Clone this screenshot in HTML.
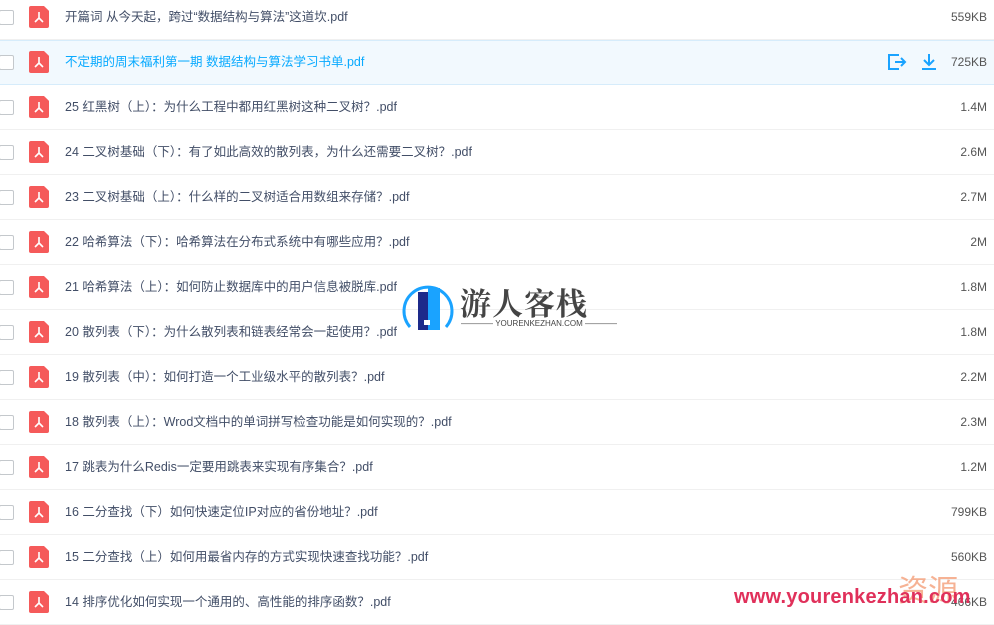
<!DOCTYPE html><html><head><meta charset="utf-8"><style>
body{margin:0;width:994px;height:612px;overflow:hidden;background:#fff;font-family:"Liberation Sans","Noto Sans CJK SC",sans-serif;position:relative}
.r{position:absolute;left:0;width:994px;height:44px;border-bottom:1px solid #f0f0f0}
.r.h{background:#f2f9fe;border-top:1px solid #d6ecfb;border-bottom:1px solid #d6ecfb;height:43px}
.h .cb,.h .ic,.h .t,.h .s{margin-top:-1px}
.cb{position:absolute;left:-1px;top:15px;width:13px;height:13px;border:1px solid #c4c8cc;border-radius:2px;background:#fff}
.ic{position:absolute;left:29px;top:11px;width:20px;height:22px;background:#f55a5a;border-radius:2px;clip-path:polygon(0 0,75% 0,100% 22%,100% 100%,0 100%)}
.ic svg{position:absolute;left:4px;top:5px}
.t{position:absolute;left:65px;top:14px;font-size:12.5px;line-height:16px;color:#424e67}
.h .t{color:#09aaff}
.s{position:absolute;right:7px;top:14px;font-size:12px;line-height:16px;color:#555}
</style></head><body>
<div id="rows"></div>
<script>
var d=[["开篇词 从今天起，跨过“数据结构与算法”这道坎.pdf","559KB"],["不定期的周末福利第一期 数据结构与算法学习书单.pdf","725KB"],["25 红黑树（上）：为什么工程中都用红黑树这种二叉树？.pdf","1.4M"],["24 二叉树基础（下）：有了如此高效的散列表，为什么还需要二叉树？.pdf","2.6M"],["23 二叉树基础（上）：什么样的二叉树适合用数组来存储？.pdf","2.7M"],["22 哈希算法（下）：哈希算法在分布式系统中有哪些应用？.pdf","2M"],["21 哈希算法（上）：如何防止数据库中的用户信息被脱库.pdf","1.8M"],["20 散列表（下）：为什么散列表和链表经常会一起使用？.pdf","1.8M"],["19 散列表（中）：如何打造一个工业级水平的散列表？.pdf","2.2M"],["18 散列表（上）：Wrod文档中的单词拼写检查功能是如何实现的？.pdf","2.3M"],["17 跳表为什么Redis一定要用跳表来实现有序集合？.pdf","1.2M"],["16 二分查找（下）如何快速定位IP对应的省份地址？.pdf","799KB"],["15 二分查找（上）如何用最省内存的方式实现快速查找功能？.pdf","560KB"],["14 排序优化如何实现一个通用的、高性能的排序函数？.pdf","466KB"]];
var h="";d.forEach(function(x,i){h+='<div class="r'+(i==1?' h':'')+'" style="top:'+(i*45-5)+'px"><div class="cb"></div><div class="ic"><svg width="12" height="13" viewBox="0 0 12 13"><path d="M6 1v6M6 7L2 11M6 7l4 4" stroke="#fff" stroke-width="1.6" fill="none"/></svg></div><div class="t">'+x[0]+'</div>'+(i==1?'<svg style="position:absolute;left:887px;top:12px" width="20" height="18" viewBox="0 0 20 18"><path d="M12 2H2v14h10M8 9h10M14 5l4 4-4 4" stroke="#1aa3ff" stroke-width="2" fill="none"/></svg><svg style="position:absolute;left:920px;top:12px" width="18" height="18" viewBox="0 0 18 18"><path d="M9 1v11M4 7l5 5 5-5M2 16h14" stroke="#1aa3ff" stroke-width="2" fill="none"/></svg>':'')+'<div class="s">'+x[1]+'</div></div>'});document.getElementById("rows").innerHTML=h;
</script>
<svg style="position:absolute;left:400px;top:280px" width="56" height="56" viewBox="0 0 56 56"><path d="M10 47A24 24 0 1 1 46 47" stroke="#1aa3ff" stroke-width="3" fill="none"/><rect x="18" y="12" width="10" height="38" fill="#1d2a8a"/><rect x="28" y="8" width="12" height="42" fill="#1aa3ff"/><rect x="24" y="40" width="6" height="5" fill="#fff"/></svg>
<div style="position:absolute;left:460px;top:279px;font-family:'Noto Serif CJK SC',serif;font-weight:bold;font-size:31px;color:#444;letter-spacing:1px">游人客栈</div>
<div style="position:absolute;left:461px;top:319px;font-size:8px;color:#444;white-space:nowrap">————&nbsp;YOURENKEZHAN.COM&nbsp;————</div>
<div style="position:absolute;left:878px;top:566px;font-size:30px;color:#f5a07a;font-family:'Noto Sans CJK SC',sans-serif;opacity:.8">&nbsp;&nbsp;&nbsp;资源</div>
<div style="position:absolute;left:734px;top:586px;font-size:20px;font-weight:bold;color:#e0305a;letter-spacing:.2px">www.yourenkezhan.com</div>
</body></html>
